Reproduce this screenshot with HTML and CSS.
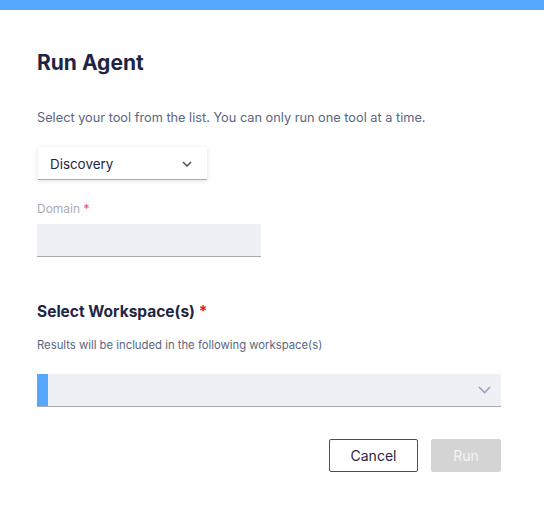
FILE: index.html
```html
<!DOCTYPE html>
<html>
<head>
<meta charset="utf-8">
<link rel="stylesheet" href="styles.css">
</head>
<body>
<div class="topbar"></div>
<main class="modal">
  <h1 class="title">Run Agent</h1>
  <p class="desc">Select your tool from the list. You can only run one tool at a time.</p>
  <div class="tool-select">
    <span>Discovery</span>
    <svg class="chev" width="10" height="6" viewBox="0 0 10 6"><path d="M1 1l4 4 4-4" fill="none" stroke="#4a4f5c" stroke-width="1.5"/></svg>
  </div>
  <label class="label">Domain <span class="req">*</span></label>
  <div class="text-input"></div>
  <h2 class="subtitle">Select Workspace(s) <span class="req-red">*</span></h2>
  <p class="hint">Results will be included in the following workspace(s)</p>
  <div class="ws-select">
    <div class="ws-bar"></div>
    <svg class="chev2" width="13" height="8" viewBox="0 0 13 8"><path d="M1 1l5.5 5.5L12 1" fill="none" stroke="#97a6bd" stroke-width="1.6"/></svg>
  </div>
  <div class="actions">
    <button class="btn cancel">Cancel</button>
    <button class="btn run">Run</button>
  </div>
</main>
</body>
</html>
```
FILE: styles.css
```css
* { box-sizing: border-box; }
body {
  margin: 0;
  background: #fff;
  font-family: Inter, "Noto Sans", sans-serif;
  color: #1f2544;
}
.topbar {
  height: 10px;
  background: #56a8ff;
}
.modal {
  padding: 0 43px 0 37px;
  display: flex;
  flex-direction: column;
  align-items: flex-start;
}
.title {
  margin: 41px 0 0;
  font-size: 21px;
  line-height: 24px;
  font-weight: 700;
  color: #1f2544;
}
.desc {
  margin: 35px 0 0;
  font-size: 12.75px;
  line-height: 16px;
  color: #5a6680;
}
.tool-select {
  margin: 21px 0 0 1px;
  width: 169px;
  height: 33px;
  background: #fff;
  border-bottom: 1px solid #a8aab0;
  box-shadow: 0 1px 5px rgba(0,0,0,0.12);
  display: flex;
  align-items: center;
  justify-content: space-between;
  padding: 1px 15px 0 12px;
  font-size: 13.4px;
  color: #1f2544;
}
.label {
  margin-top: 21px;
  font-size: 12px;
  line-height: 16px;
  color: #a9adb8;
}
.req { color: #f2486b; }
.req-red { color: #e8182a; }
.text-input {
  margin-top: 7px;
  width: 224px;
  height: 33px;
  background: #edf1f5;
  border-bottom: 1px solid #a8aab0;
}
.subtitle {
  margin: 45px 0 0;
  font-size: 15.5px;
  line-height: 20px;
  font-weight: 700;
  color: #1f2544;
}
.hint {
  margin: 15px 0 0;
  font-size: 11.3px;
  line-height: 16px;
  color: #5a6680;
}
.ws-select {
  margin-top: 21px;
  width: 464px;
  align-self: stretch;
  height: 33px;
  background: #edf1f5;
  border-bottom: 1px solid #a8aab0;
  display: flex;
  align-items: center;
  justify-content: space-between;
  padding-right: 10px;
}
.ws-bar {
  width: 11px;
  height: 32px;
  background: #56a8ff;
}
.actions {
  margin-top: 32px;
  align-self: stretch;
  display: flex;
  justify-content: flex-end;
  gap: 13px;
}
.btn {
  height: 33px;
  font-family: Inter, "Noto Sans", sans-serif;
  font-size: 14px;
  border-radius: 2px;
}
.cancel {
  width: 89px;
  background: #fff;
  border: 1px solid #4d4f57;
  color: #1f2544;
}
.run {
  width: 70px;
  background: #d4d4d4;
  border: none;
  color: #f4f4f4;
}
```
